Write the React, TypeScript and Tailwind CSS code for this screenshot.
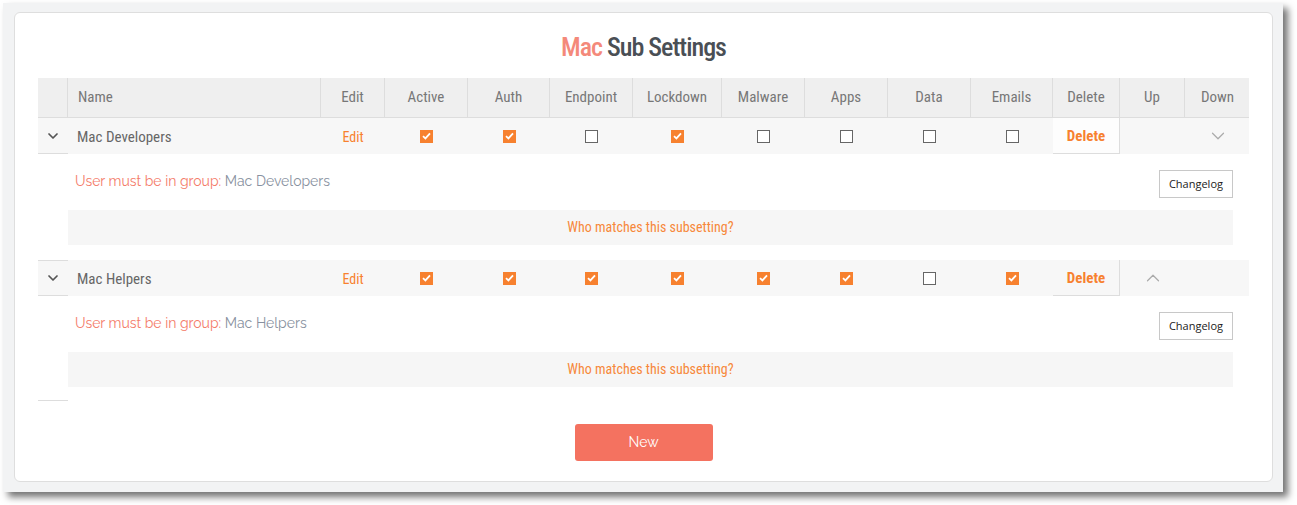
import { ChevronDown, ChevronUp } from 'lucide-react';

const condensed = { fontFamily: "'Roboto Condensed', 'Liberation Sans Narrow', 'DejaVu Sans Condensed', Roboto, sans-serif" };
const body = { fontFamily: "Raleway, Lato, 'Open Sans', sans-serif" };

const grid =
    'grid grid-cols-[30px_253px_64px_83px_82px_83px_89px_83px_83px_83px_82px_67px_65px_65px]';

const columns = ['Edit', 'Active', 'Auth', 'Endpoint', 'Lockdown', 'Malware', 'Apps', 'Data', 'Emails', 'Delete', 'Up', 'Down'];

type Sub = {
    name: string;
    flags: boolean[];
    up: boolean;
    down: boolean;
    last: boolean;
};

const subs: Sub[] = [
    { name: 'Mac Developers', flags: [true, true, false, true, false, false, false, false], up: false, down: true, last: false },
    { name: 'Mac Helpers', flags: [true, true, true, true, true, true, false, true], up: true, down: false, last: true },
];

const Box = ({ on }: { on: boolean }) =>
    on ? (
        <span className="w-[13px] h-[13px] bg-[#f7812f] flex items-center justify-center">
            <svg width="9" height="8" viewBox="0 0 9 8">
                <path d="M1 4.2 L3.4 6.4 L8 1.4" fill="none" stroke="#fff" strokeWidth="1.8" />
            </svg>
        </span>
    ) : (
        <span className="w-[13px] h-[13px] bg-white border border-[#666]" />
    );

const SubRow = ({ sub, first }: { sub: Sub; first: boolean }) => (
    <div>
        <div className={`${grid} h-9 bg-[#f7f7f7] items-center`}>
            <div className={`h-full flex items-center justify-center border-b border-[#ddd] ${first ? '' : 'border-t'}`}>
                <ChevronDown size={16} strokeWidth={2.6} className="text-[#555]" />
            </div>
            <div className="pl-[9px] pt-[2px] text-[15px] text-[#666]" style={condensed}>
                {sub.name}
            </div>
            <div className="pt-[2px] text-center text-[14px] text-[#f7812f]" style={condensed}>
                Edit
            </div>
            {sub.flags.map((f, i) => (
                <div key={i} className="flex justify-center">
                    <Box on={f} />
                </div>
            ))}
            <div
                className={`h-full pt-[2px] flex items-center justify-center border-r border-b border-[#ddd] text-[15px] font-bold text-[#f7812f] ${first ? 'bg-[#fdfdfd]' : ''}`}
                style={condensed}
            >
                Delete
            </div>
            <div className="flex justify-center">
                {sub.up && <ChevronUp size={22} strokeWidth={1.3} className="text-[#aaa]" />}
            </div>
            <div className="flex justify-center">
                {sub.down && <ChevronDown size={22} strokeWidth={1.3} className="text-[#aaa]" />}
            </div>
        </div>
        <div className="flex">
            <div className={`w-[30px] ${sub.last ? 'h-[105px] border-b border-[#ddd]' : ''}`} />
            <div className="flex-1 pr-[16px] pt-[16px] pb-[15px]">
                <div className="flex justify-between items-start pl-[7px]">
                    <div className="text-[14px] pt-[1px]" style={body}>
                        <span className="text-[#f47c6a]">User must be in group: </span>
                        <span className="text-[#8891a0]">{sub.name}</span>
                    </div>
                    <button
                        className="h-[28px] px-[9px] border border-[#c8c8c8] bg-white text-[11px] text-[#222]"
                        style={{ fontFamily: "'Open Sans', sans-serif" }}
                    >
                        Changelog
                    </button>
                </div>
                <div
                    className="mt-[12px] h-[35px] bg-[#f6f6f6] flex items-center justify-center text-[14px] text-[#f7883a]"
                    style={condensed}
                >
                    Who matches this subsetting?
                </div>
            </div>
        </div>
    </div>
);

export default function App() {
    return (
        <div className="w-[1297px] h-[505px] bg-white pt-[3px] pl-[3px]">
            <div className="w-[1280px] h-[489px] bg-[#f2f3f4] pt-[9px] pl-[11px] shadow-[5px_5px_7px_rgba(0,0,0,0.55)]">
                <div className="w-[1259px] h-[470px] bg-white border border-[#dedede] rounded-[6px] px-[23px]">
                    <h1
                        className="text-center text-[26px] font-medium tracking-[-1px] pt-[17px] h-[65px] leading-[34px]"
                        style={condensed}
                    >
                        <span className="text-[#f4897a]">Mac</span> <span className="text-[#4a4f55]">Sub Settings</span>
                    </h1>
                    <div className={`${grid} h-10 bg-[#efefef] border-b border-[#ddd] text-[15px] text-[#777]`} style={condensed}>
                        <div className="border-r border-[#ddd]" />
                        <div className="border-r border-[#ddd] flex items-center pl-[10px]">Name</div>
                        {columns.map((c, i) => (
                            <div
                                key={c}
                                className={`flex items-center justify-center ${i < columns.length - 1 ? 'border-r border-[#ddd]' : ''}`}
                            >
                                {c}
                            </div>
                        ))}
                    </div>
                    {subs.map((s, i) => (
                        <SubRow key={s.name} sub={s} first={i === 0} />
                    ))}
                    <div className="flex justify-center pt-[22px]">
                        <button className="w-[138px] h-[37px] rounded-[3px] bg-[#f47260] text-white text-[14px]" style={body}>
                            New
                        </button>
                    </div>
                </div>
            </div>
        </div>
    );
}
